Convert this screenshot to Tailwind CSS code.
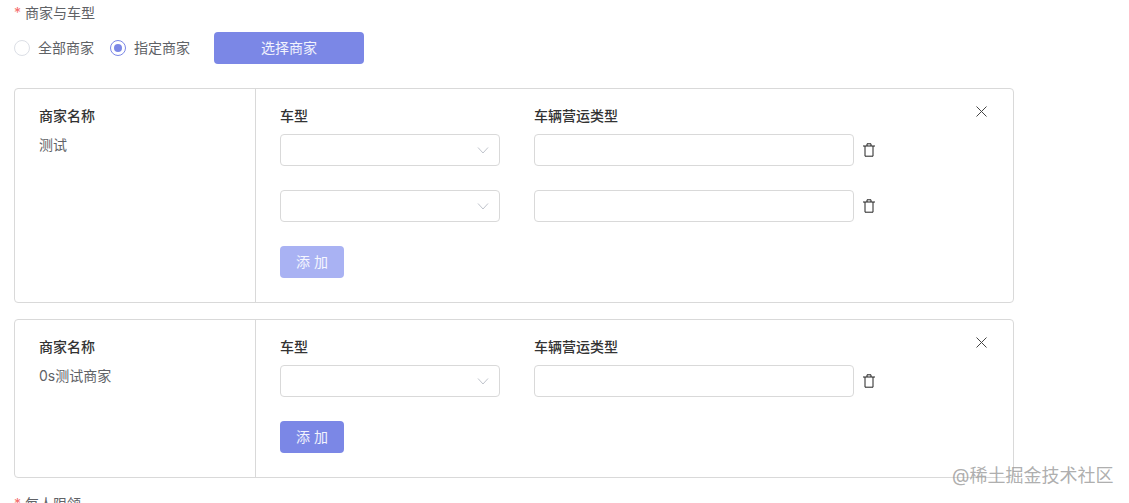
<!DOCTYPE html>
<html lang="zh-CN">
<head>
    <meta charset="UTF-8">
    <title>商家与车型</title>
    <script src="https://cdn.jsdelivr.net/npm/@tailwindcss/browser@4"></script>
</head>
<body class="relative h-[503px] overflow-hidden bg-white font-['Inter','Noto_Sans_CJK_SC',sans-serif] text-sm text-[#606266] antialiased">
    <div class="pl-[14px] w-[1014px]">
        <!-- 商家与车型 -->
        <div class="flex items-center h-[26px] gap-[5px]">
            <span class="text-[#f56c6c] w-[6px]">*</span>
            <span>商家与车型</span>
        </div>
        <div class="flex items-center h-8 mt-[6px]">
            <span class="w-4 h-4 rounded-full border border-[#dcdfe6] bg-white"></span>
            <span class="ml-2">全部商家</span>
            <span class="ml-4 w-4 h-4 rounded-full border border-[#7b87e6] flex items-center justify-center">
                <span class="w-2 h-2 rounded-full bg-[#7b87e6]"></span>
            </span>
            <span class="ml-2">指定商家</span>
            <button class="ml-6 w-[150px] h-8 rounded bg-[#7b87e6] text-white/90">选择商家</button>
        </div>

        <!-- 商家卡片 1 -->
        <div class="relative flex mt-6 border border-[#d9d9d9] rounded">
            <div class="w-[241px] shrink-0 border-r border-[#d9d9d9] pl-6 pt-4">
                <div class="h-[22px] leading-[22px] font-medium text-[#333]">商家名称</div>
                <div class="mt-[7px] h-[22px] leading-[22px]">测试</div>
            </div>
            <div class="pl-6 pt-4 pb-6">
                <div class="flex h-[22px] leading-[22px] mb-[7px] font-medium text-[#333]">
                    <span class="w-[254px]">车型</span>
                    <span>车辆营运类型</span>
                </div>
                <div class="flex items-center mb-6">
                    <div class="w-[220px] h-8 border border-[#d9d9d9] rounded flex items-center justify-end pr-[10px]">
                        <svg class="w-3 h-3" viewBox="0 0 12 12" fill="none" stroke="#c0c4cc" stroke-width="1"><path d="M1 3.5 6 9l5-5.5"/></svg>
                    </div>
                    <div class="ml-[34px] w-[320px] h-8 border border-[#d9d9d9] rounded"></div>
                    <svg class="ml-[9px] w-3 h-[14px]" viewBox="0 0 12 14" fill="none" stroke="#222" stroke-width="1"><path d="M0 3h12M4 3V.8h4V3M2 3v10.2h8V3"/></svg>
                </div>
                <div class="flex items-center mb-6">
                    <div class="w-[220px] h-8 border border-[#d9d9d9] rounded flex items-center justify-end pr-[10px]">
                        <svg class="w-3 h-3" viewBox="0 0 12 12" fill="none" stroke="#c0c4cc" stroke-width="1"><path d="M1 3.5 6 9l5-5.5"/></svg>
                    </div>
                    <div class="ml-[34px] w-[320px] h-8 border border-[#d9d9d9] rounded"></div>
                    <svg class="ml-[9px] w-3 h-[14px]" viewBox="0 0 12 14" fill="none" stroke="#222" stroke-width="1"><path d="M0 3h12M4 3V.8h4V3M2 3v10.2h8V3"/></svg>
                </div>
                <button class="w-16 h-8 rounded bg-[#a9b2f3] text-white/90">添 加</button>
            </div>
            <svg class="absolute right-[26px] top-[17px] w-[11px] h-[11px]" viewBox="0 0 11 11" fill="none" stroke="#444" stroke-width="1"><path d="M.5.5l10 10M10.5.5l-10 10"/></svg>
        </div>

        <!-- 商家卡片 2 -->
        <div class="relative flex mt-4 border border-[#d9d9d9] rounded">
            <div class="w-[241px] shrink-0 border-r border-[#d9d9d9] pl-6 pt-4">
                <div class="h-[22px] leading-[22px] font-medium text-[#333]">商家名称</div>
                <div class="mt-[7px] h-[22px] leading-[22px]">0s测试商家</div>
            </div>
            <div class="pl-6 pt-4 pb-6">
                <div class="flex h-[22px] leading-[22px] mb-[7px] font-medium text-[#333]">
                    <span class="w-[254px]">车型</span>
                    <span>车辆营运类型</span>
                </div>
                <div class="flex items-center mb-6">
                    <div class="w-[220px] h-8 border border-[#d9d9d9] rounded flex items-center justify-end pr-[10px]">
                        <svg class="w-3 h-3" viewBox="0 0 12 12" fill="none" stroke="#c0c4cc" stroke-width="1"><path d="M1 3.5 6 9l5-5.5"/></svg>
                    </div>
                    <div class="ml-[34px] w-[320px] h-8 border border-[#d9d9d9] rounded"></div>
                    <svg class="ml-[9px] w-3 h-[14px]" viewBox="0 0 12 14" fill="none" stroke="#222" stroke-width="1"><path d="M0 3h12M4 3V.8h4V3M2 3v10.2h8V3"/></svg>
                </div>
                <button class="w-16 h-8 rounded bg-[#7b87e6] text-white/90">添 加</button>
            </div>
            <svg class="absolute right-[26px] top-[17px] w-[11px] h-[11px]" viewBox="0 0 11 11" fill="none" stroke="#444" stroke-width="1"><path d="M.5.5l10 10M10.5.5l-10 10"/></svg>
        </div>

        <!-- 每人限领 -->
        <div class="flex items-center h-[26px] gap-[5px] mt-[13px]">
            <span class="text-[#f56c6c] w-[6px]">*</span>
            <span>每人限领</span>
        </div>
    </div>

    <!-- 水印 -->
    <div class="absolute left-[952px] top-[464px] text-[18px] leading-6 text-[#999]/80 whitespace-nowrap">@稀土掘金技术社区</div>
</body>
</html>
